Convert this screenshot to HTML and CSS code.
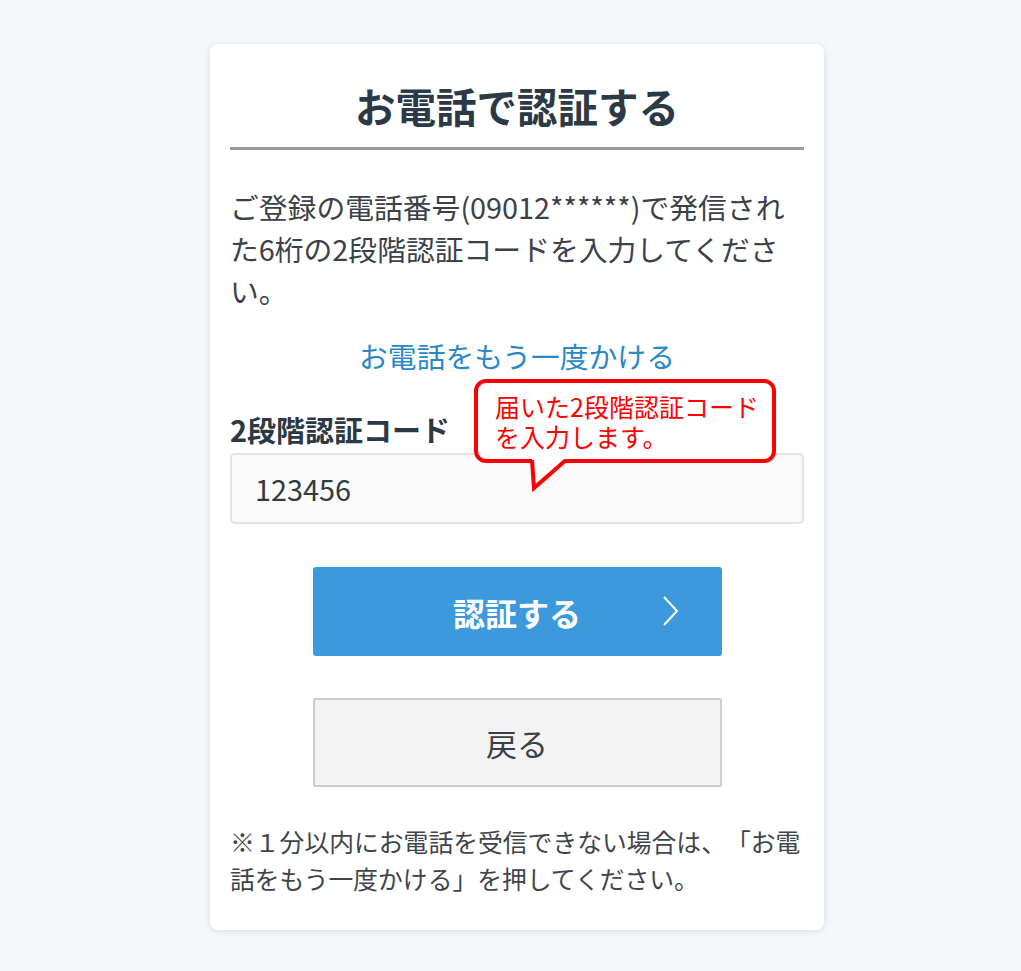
FILE: index.html
```html
<!DOCTYPE html>
<html lang="ja">
<head>
<meta charset="utf-8">
<title>お電話で認証する</title>
<link rel="stylesheet" href="styles.css">
</head>
<body>
<main class="card">
  <h1 class="title">お電話で認証する</h1>
  <p class="lead">ご登録の電話番号(09012******)で発信された6桁の2段階認証コードを入力してください。</p>
  <div class="resend"><a href="#" class="link">お電話をもう一度かける</a></div>
  <div class="field">
    <label class="label" for="code">2段階認証コード</label>
    <input class="input" id="code" type="text" value="123456">
    <div class="balloon">
      <span class="balloon-text">届いた2段階認証コード<br>を入力します。</span>
      <svg class="balloon-tail" width="44" height="36" viewBox="0 0 44 36">
        <polygon points="2,0 4,29 36,0" fill="#fff"/>
        <polyline points="2,1 4,29 36,1" fill="none" stroke="#f00" stroke-width="4" stroke-linejoin="miter"/>
      </svg>
    </div>
  </div>
  <div class="actions">
    <button class="btn btn-primary" type="button">
      <span>認証する</span>
      <svg class="chevron" width="16" height="30" viewBox="0 0 16 30"><polyline points="1,1 14,15 1,29" fill="none" stroke="#fff" stroke-width="2"/></svg>
    </button>
    <button class="btn btn-back" type="button">戻る</button>
  </div>
  <p class="note">※１分以内にお電話を受信できない場合は、「お電話をもう一度かける」を押してください。</p>
</main>
</body>
</html>
```

FILE: styles.css
```css
html, body {
  margin: 0;
  padding: 0;
}
body {
  background: #f5f8fb;
  font-family: "Noto Sans CJK JP", "Noto Sans", sans-serif;
  color: #3a3f45;
  padding-top: 44px;
  padding-bottom: 40px;
  text-spacing-trim: space-all;
}
.card {
  width: 574px;
  margin-left: 210px;
  background: #fff;
  border-radius: 8px;
  box-shadow: 0 1px 6px rgba(0, 0, 0, 0.12);
  padding: 38px 20px 33px;
  display: flex;
  flex-direction: column;
}
.title {
  margin: 0;
  font-size: 40.5px;
  line-height: 48px;
  font-weight: 700;
  text-align: center;
  color: #2c3946;
  padding-bottom: 17px;
  border-bottom: 3px solid #9a9a9a;
}
.lead {
  margin: 36px 0 0;
  font-size: 28.8px;
  line-height: 42px;
  color: #3b4148;
}
.resend {
  margin-top: 23px;
  text-align: center;
  font-size: 28.8px;
  line-height: 42px;
}
.link {
  color: #2a88c6;
  text-decoration: none;
}
.field {
  position: relative;
  margin-top: 32px;
  display: flex;
  flex-direction: column;
}
.label {
  font-size: 29px;
  line-height: 40px;
  font-weight: 700;
  color: #2c3844;
}
.input {
  margin-top: 4px;
  height: 71px;
  box-sizing: border-box;
  border: 2px solid #e3e3e3;
  border-radius: 5px;
  background: #fafafa;
  padding: 0 0 0 23px;
  font-family: "Noto Sans CJK JP", "Noto Sans", sans-serif;
  font-size: 28.8px;
  color: #333a42;
  outline: none;
}
.balloon {
  position: absolute;
  top: -30px;
  left: 244px;
  width: 302px;
  height: 84px;
  box-sizing: border-box;
  border: 4px solid #f00;
  border-radius: 12px;
  background: #fff;
  padding: 8px 0 0 17px;
}
.balloon-text {
  display: block;
  color: #f00;
  font-size: 25px;
  line-height: 30px;
  white-space: nowrap;
}
.balloon-tail {
  position: absolute;
  left: 52px;
  top: 76px;
}
.actions {
  margin-top: 43px;
  display: flex;
  flex-direction: column;
  align-items: center;
  gap: 42px;
}
.btn {
  width: 409px;
  height: 89px;
  box-sizing: border-box;
  font-family: "Noto Sans CJK JP", "Noto Sans", sans-serif;
  cursor: pointer;
  display: flex;
  align-items: center;
  justify-content: center;
  position: relative;
}
.btn-primary {
  background: #3c9adc;
  border: none;
  border-radius: 3px;
  color: #fff;
  font-size: 32px;
  font-weight: 700;
}
.chevron {
  position: absolute;
  right: 43px;
  top: 29px;
}
.btn-back {
  background: #f3f3f3;
  border: 2px solid #cdcdcd;
  border-radius: 2px;
  color: #3a3f45;
  font-size: 31px;
  font-weight: 400;
}
.note {
  margin: 36px 0 0;
  font-size: 24.8px;
  line-height: 37px;
  color: #3f444a;
}
```
